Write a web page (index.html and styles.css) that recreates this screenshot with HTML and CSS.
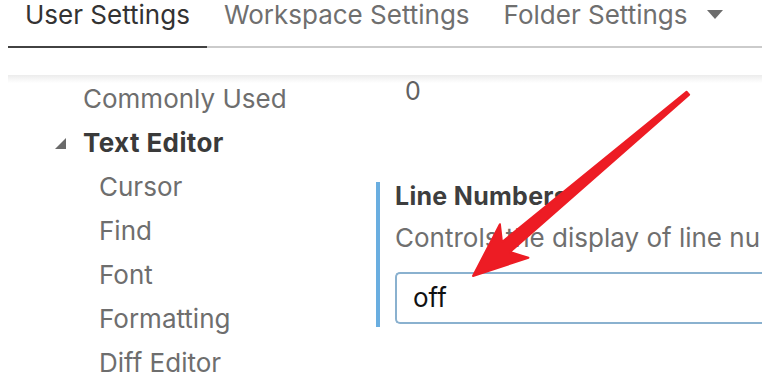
FILE: index.html
```html
<!DOCTYPE html>
<html>
<head>
<meta charset="utf-8">
<link rel="stylesheet" href="styles.css">
</head>
<body>
<div class="page">
  <div class="tabs">
    <div class="tab active">User Settings</div>
    <div class="tab">Workspace Settings</div>
    <div class="tab">Folder Settings <span class="caret"></span></div>
  </div>
  <div class="shadow"></div>
  <div class="main">
    <div class="nav">
      <div class="nav-item top">Commonly Used</div>
      <div class="nav-item group"><span class="twisty"></span>Text Editor</div>
      <div class="nav-item child">Cursor</div>
      <div class="nav-item child">Find</div>
      <div class="nav-item child">Font</div>
      <div class="nav-item child">Formatting</div>
      <div class="nav-item child">Diff Editor</div>
    </div>
    <div class="content">
      <div class="prev-value">0</div>
      <div class="setting">
        <div class="setting-title">Line Numbers</div>
        <div class="setting-desc">Controls the display of line nu</div>
        <div class="setting-input">off</div>
      </div>
    </div>
  </div>
</div>
<svg class="arrow" width="762" height="386" viewBox="0 0 762 386">
  <polygon points="686.5,91.7 689.1,94.7 510,252 528.4,257.8 473,276 499.9,224.2 502,242" fill="#ed1c24" stroke="#ed1c24" stroke-width="2" stroke-linejoin="round"/>
</svg>
</body>
</html>
```
FILE: styles.css
```css
html, body {
  margin: 0;
  padding: 0;
  width: 762px;
  height: 386px;
  overflow: hidden;
  background: #ffffff;
}
body {
  font-family: "Inter", "Noto Sans", sans-serif;
  position: relative;
}
.page {
  padding-left: 8px;
}
.tabs {
  display: flex;
  height: 46px;
  border-bottom: 2px solid #cbcbcb;
  width: 900px;
}
.tab {
  padding: 0 17px;
  font-size: 26px;
  line-height: 30px;
  color: #6f6f6f;
  display: flex;
  align-items: flex-start;
  margin-bottom: -2px;
  white-space: nowrap;
}
.tab.active {
  color: #333333;
  border-bottom: 2px solid #424242;
}
.caret {
  display: inline-block;
  width: 0;
  height: 0;
  border-left: 8px solid transparent;
  border-right: 8px solid transparent;
  border-top: 9px solid #6c6c6c;
  margin-left: 19px;
  margin-top: 10px;
}
.shadow {
  margin-top: 27px;
  height: 8px;
  background: linear-gradient(#ececec, #ffffff);
}
.main {
  display: flex;
  margin-top: -8px;
}
.nav {
  width: 368px;
  flex: none;
  padding-top: 2px;
}
.nav-item {
  font-size: 26px;
  line-height: 44px;
  color: #6e6e6e;
  white-space: nowrap;
}
.nav-item.top {
  padding-left: 75px;
}
.nav-item.group {
  padding-left: 47px;
  font-weight: 700;
  color: #3a3a3a;
  display: flex;
  align-items: center;
  letter-spacing: 0.4px;
}
.twisty {
  width: 0;
  height: 0;
  border-left: 11px solid transparent;
  border-bottom: 11px solid #6a6a6a;
  margin-right: 17px;
  margin-top: 0px;
}
.nav-item.child {
  padding-left: 91px;
}
.content {
  flex: none;
  width: 386px;
  overflow: hidden;
}
.prev-value {
  font-size: 25px;
  line-height: 32px;
  color: #616161;
  padding-left: 29px;
}
.setting {
  margin-top: 75px;
  border-left: 4px solid #6aaee0;
  padding: 0 0 3px 15px;
}
.setting-title {
  font-size: 25px;
  font-weight: 700;
  color: #3e3e3e;
  line-height: 28px;
  letter-spacing: 0.3px;
}
.setting-desc {
  font-size: 26px;
  color: #6f6f6f;
  line-height: 32px;
  margin-top: 12px;
  white-space: nowrap;
}
.setting-input {
  margin-top: 18px;
  height: 48px;
  border: 2px solid #8ab1cf;
  border-right: none;
  border-radius: 5px 0 0 5px;
  font-size: 26px;
  line-height: 48px;
  color: #111111;
  padding-left: 16px;
}
.arrow {
  position: absolute;
  left: 0;
  top: 0;
}
```
